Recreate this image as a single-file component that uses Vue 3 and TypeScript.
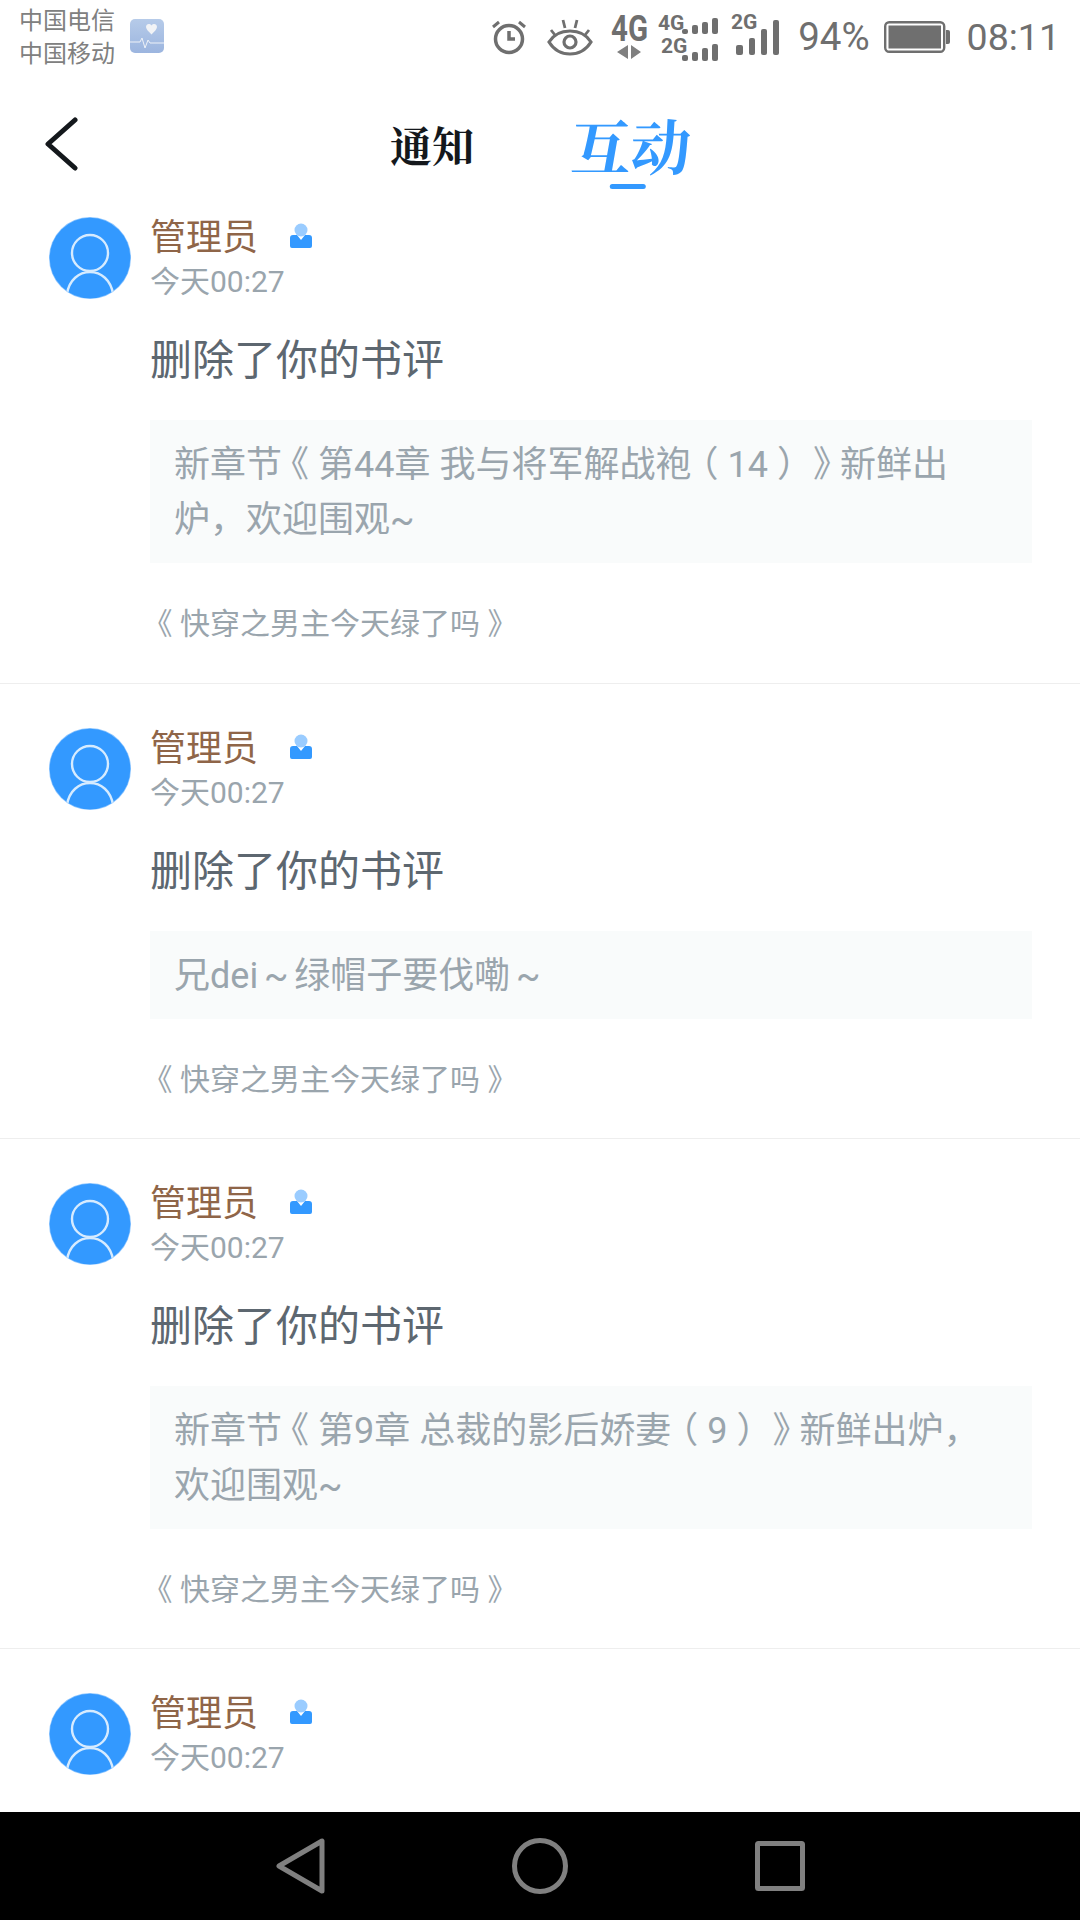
<template>
  <div class="page">
    <div class="status">
      <div class="carriers">
        <span>中国电信</span>
        <span>中国移动</span>
      </div>
      <svg class="health" width="34" height="34" viewBox="0 0 34 34">
        <defs>
          <linearGradient id="hg" x1="0" y1="0" x2="0" y2="1">
            <stop offset="0" stop-color="#b6cbe9" />
            <stop offset="1" stop-color="#9cb5df" />
          </linearGradient>
        </defs>
        <rect width="34" height="34" rx="5" fill="url(#hg)" />
        <path d="M22 8.500c-2-2.500-5.500-1.500-5.500 1.500 0 2 2.500 4.500 5.500 7.500 3-3 5.500-5.500 5.500-7.500 0-3-3.500-4-5.500-1.500z" transform="translate(-.5 -2)" fill="#f1f3f6" />
        <path d="M0 23h10l2-4 3 10 3-8 2 3h14" fill="none" stroke="#eef2f8" stroke-width="1" />
      </svg>

      <div class="icons">
        <svg width="36" height="36" viewBox="0 0 36 36" fill="none" stroke="#6f6f6f">
          <circle cx="18" cy="20" r="13.500" stroke-width="3.500" />
          <path d="M18 12v8h6" stroke-width="3.500" />
          <path d="M2 8l6-5M34 8l-6-5" stroke-width="3" />
        </svg>
        <svg class="eye" width="46" height="38" viewBox="0 0 46 38" fill="none" stroke="#6f6f6f">
          <path d="M2 24c5-8 12-11 21-11s16 3 21 11c-5 8-12 12-21 12S7 32 2 24z" stroke-width="3.200" />
          <circle cx="23" cy="24" r="6" stroke-width="3.200" />
          <path d="M4 12l4 5M16 2l2 8M30 2l-2 8M42 12l-4 5" stroke-width="2.800" />
        </svg>
        <svg class="signal" width="170" height="50" viewBox="0 0 170 50" fill="#6f6f6f">
          <text x="1" y="27" class="big" textLength="37" lengthAdjust="spacingAndGlyphs">4G</text>
          <path d="M18 31v14l-11-7zM21 31v14l10-7z" fill="#808080" />

          <text x="48" y="16" class="small">4G</text>
          <text x="51" y="39" class="small">2G</text>
          <rect x="72" y="15" width="6" height="5" rx="2" />
          <rect x="82" y="11" width="6" height="9" rx="2" />
          <rect x="92" y="8" width="6" height="12" rx="2" />
          <rect x="102" y="4" width="6" height="16" rx="2" />
          <rect x="72" y="41" width="6" height="6" rx="2" />
          <rect x="82" y="38" width="6" height="9" rx="2" />
          <rect x="92" y="34" width="6" height="13" rx="2" />
          <rect x="102" y="30" width="6" height="17" rx="2" />

          <text x="121" y="15" class="small">2G</text>
          <rect x="126" y="31" width="7" height="10" rx="2" />
          <rect x="139" y="24" width="6" height="17" rx="2" />
          <rect x="151" y="15" width="6" height="26" rx="2" />
          <rect x="163" y="6" width="6" height="35" rx="2" />
        </svg>
        <span class="pct">94%</span>
        <svg class="batt" width="66" height="32" viewBox="0 0 66 32">
          <rect x="1.200" y="1.200" width="59" height="29.600" rx="4" fill="none" stroke="#6f6f6f" stroke-width="2.400" />
          <rect x="4.500" y="4.500" width="52.500" height="23" fill="#6f6f6f" />
          <path d="M62 9h2a2 2 0 0 1 2 2v10a2 2 0 0 1-2 2h-2z" fill="#6f6f6f" />
        </svg>
        <span class="clock">08:11</span>
      </div>
    </div>

    <div class="header">
      <svg class="back" width="33" height="54" viewBox="0 0 33 54" fill="none">
        <path d="M30 3L3 27l27 24" stroke="#14181c" stroke-width="5" stroke-linecap="round" stroke-linejoin="round" />
      </svg>
      <span class="tab">通知</span>
      <span class="tab active">互动</span>
    </div>

    <div class="list">
      <div v-for="item in items" :key="item.id" class="item">
        <svg class="avatar" width="82" height="82" viewBox="0 0 82 82">
          <defs>
            <clipPath :id="`av${item.id}`">
              <circle cx="41" cy="41" r="40.500" />
            </clipPath>
          </defs>
          <circle cx="41" cy="41" r="41" fill="#8ec6ff" />
          <circle cx="41" cy="41" r="40.300" fill="#3399ff" />
          <g :clip-path="`url(#av${item.id})`" fill="none" stroke="#d6ebff" stroke-width="2.400">
            <circle cx="41" cy="36" r="18" />
            <path d="M18 77c2-14 12-22 23-22s21 8 23 22" />
          </g>
        </svg>
        <div class="body">
          <div class="name-row">
            <span class="name">管理员</span>
            <svg class="badge" width="22" height="25" viewBox="0 0 22 25">
              <circle cx="11" cy="7" r="6.500" fill="#9accff" />
              <path d="M3 12h4l4 5 4-5h4a3 3 0 0 1 3 3v8a2 2 0 0 1-2 2H2a2 2 0 0 1-2-2v-8a3 3 0 0 1 3-3z" fill="#3399ff" />
            </svg>
          </div>
          <div class="time">今天00:27</div>
          <div class="title">删除了你的书评</div>
          <div v-if="item.quote" class="quote">
            <span v-for="(part, i) in split(item.quote)" :key="i" :class="part.cls">{{ part.text }}</span>
          </div>
          <div v-if="item.quote" class="book">
            <span v-for="(part, i) in split(bookName)" :key="i" :class="part.cls">{{ part.text }}</span>
          </div>
        </div>
      </div>
    </div>

    <div class="navbar">
      <svg width="49" height="56" viewBox="0 0 49 56" fill="none" stroke="#808080" stroke-width="5" stroke-linejoin="round">
        <path d="M46 3v50L3 28z" />
      </svg>
      <svg width="56" height="56" viewBox="0 0 56 56" fill="none" stroke="#808080" stroke-width="5">
        <circle cx="28" cy="28" r="25.500" />
      </svg>
      <svg width="50" height="50" viewBox="0 0 50 50" fill="none" stroke="#808080" stroke-width="5" stroke-linejoin="round">
        <rect x="2.500" y="2.500" width="45" height="45" rx="1" />
      </svg>
    </div>
  </div>
</template>

<script setup lang="ts">
interface Notice {
  id: number
  quote: string
}

interface Part {
  text: string
  cls: string
}

const bookName = '《快穿之男主今天绿了吗》'

const items: Notice[] = [
  { id: 1, quote: '新章节《第44章 我与将军解战袍（14）》新鲜出炉，欢迎围观~' },
  { id: 2, quote: '兄dei～绿帽子要伐嘞～' },
  { id: 3, quote: '新章节《第9章 总裁的影后娇妻（9）》新鲜出炉，欢迎围观~' },
  { id: 4, quote: '' },
]

// the reference font centres brackets and tildes in their cell, ours does not
function split(text: string): Part[] {
  return text
    .split(/([《（）》～])/)
    .filter(Boolean)
    .map((t) => {
      if (t === '《' || t === '（') return { text: t, cls: 'open' }
      if (t === '）' || t === '》') return { text: t, cls: 'close' }
      if (t === '～') return { text: '~', cls: 'tilde' }
      return { text: t, cls: '' }
    })
}
</script>

<style>
html,
body {
  margin: 0;
  background: #fff;
}
</style>

<style scoped>
.page {
  width: 1080px;
  height: 1920px;
  display: flex;
  flex-direction: column;
  overflow: hidden;
  background: #fff;
  font-family: Roboto, "Noto Sans CJK SC", sans-serif;
}

.status {
  height: 73px;
  flex: none;
  display: flex;
  align-items: center;
  padding: 0 20px 0 19px;
  box-sizing: border-box;
}

.carriers {
  display: flex;
  flex-direction: column;
  font-size: 24px;
  line-height: 33px;
  color: #808080;
  margin-top: 2px;
}

.health {
  margin-left: 15px;
  margin-top: -2px;
}

.icons {
  margin-left: auto;
  display: flex;
  align-items: center;
  color: #6f6f6f;
}

.icons svg {
  flex: none;
}

.eye {
  margin-left: 20px;
}

.signal {
  margin-left: 17px;
  margin-top: 5px;
  overflow: visible;
}

.big {
  font: 700 36px Roboto, sans-serif;
}

.small {
  font: 700 21px Roboto, sans-serif;
}

.pct {
  margin-left: 18px;
  font-size: 38.500px;
  line-height: 44px;
}

.batt {
  margin-left: 14px;
  margin-top: 1px;
}

.clock {
  margin-left: 17px;
  font-size: 37.500px;
  line-height: 44px;
}

.header {
  height: 100px;
  flex: none;
  display: flex;
  align-items: center;
  padding: 42px 0 0 45px;
  box-sizing: border-box;
}

.tab {
  margin-left: 312px;
  font-family: "Noto Serif CJK SC", "Noto Sans CJK SC", serif;
  font-size: 42px;
  font-weight: 700;
  color: #14181c;
}

.tab.active {
  position: relative;
  margin-left: 97px;
  font-size: 60px;
  color: #3399ff;
  transform: skewX(-3deg);
}

.tab.active::after {
  content: "";
  position: absolute;
  left: 41px;
  bottom: -2px;
  width: 36px;
  height: 5px;
  border-radius: 3px;
  background: #3399ff;
  transform: skewX(3deg);
}

.list {
  flex: 1;
  overflow: hidden;
}

.item {
  display: flex;
  align-items: flex-start;
  padding: 44px 48px 0 49px;
  border-bottom: 1px solid #eeeeee;
  box-sizing: border-box;
}

.item:first-child {
  padding-bottom: 1px;
}

.avatar {
  flex: none;
}

.body {
  flex: 1;
  min-width: 0;
  margin-left: 19px;
  margin-top: 1px;
}

.name-row {
  height: 40px;
  display: flex;
  align-items: center;
}

.name {
  font-size: 36px;
  line-height: 40px;
  color: #8f6548;
}

.badge {
  margin-left: 32px;
  margin-top: -5px;
}

.time {
  margin-top: 4px;
  font-size: 30px;
  line-height: 40px;
  color: #9aa5ad;
}

.title {
  margin-top: 30px;
  font-size: 42px;
  line-height: 58px;
  color: #5d6770;
}

.quote {
  margin-top: 30px;
  padding: 18px 24px 15px;
  font-size: 36px;
  line-height: 55px;
  color: #9aa5ad;
  background: #f9fbfb;
  text-spacing-trim: space-all;
}

.book {
  margin-top: 41px;
  padding-bottom: 38px;
  font-size: 30px;
  line-height: 40px;
  color: #9aa5ad;
  text-spacing-trim: space-all;
}

.open {
  margin-left: -0.25em;
  margin-right: 0.25em;
}

.close {
  margin-left: 0.25em;
  margin-right: -0.25em;
}

.tilde {
  display: inline-block;
  width: 1em;
  text-align: center;
}

.navbar {
  height: 108px;
  flex: none;
  display: flex;
  align-items: center;
  background: #000;
  padding-left: 276px;
  gap: 187px;
  box-sizing: border-box;
}
</style>
